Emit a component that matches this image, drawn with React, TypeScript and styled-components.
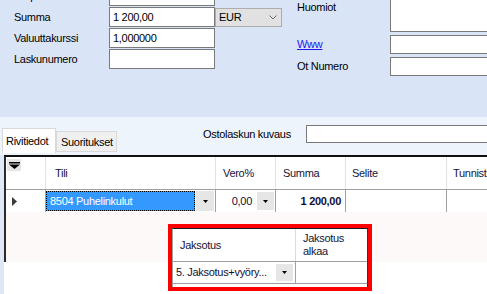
import React from 'react';
import styled, { createGlobalStyle } from 'styled-components';

const GlobalStyle = createGlobalStyle`
  html, body {
    margin: 0;
    padding: 0;
    background: #ffffff;
  }
  body {
    font-family: "Liberation Sans", Arial, sans-serif;
    font-size: 11px;
    letter-spacing: -0.3px;
    line-height: 13px;
    color: #000;
    overflow: hidden;
  }
  * {
    box-sizing: border-box;
  }
`;

const Window = styled.div`
  width: 487px;
  height: 294px;
  overflow: hidden;
  display: flex;
  flex-direction: column;
  background: #ffffff;
`;

/* ---------- top form ---------- */

const TopPanel = styled.div`
  flex: none;
  height: 117px;
  background: #d9e5f7;
  display: flex;
  align-items: flex-start;
  padding-left: 14px;
  overflow: hidden;
`;

const LeftFields = styled.div`
  flex: none;
  display: grid;
  grid-template-columns: 95px 106px 67px;
  grid-auto-rows: 20px;
  row-gap: 1px;
  margin-top: -14px;
`;

const RightFields = styled.div`
  flex: none;
  display: grid;
  grid-template-columns: 93px 110px;
  grid-template-rows: 42px 19px 19px;
  row-gap: 3px;
  margin-top: -10px;
  margin-left: 15px;
`;

const Label = styled.div<{ $top?: boolean }>`
  display: flex;
  align-items: ${(p) => (p.$top ? 'flex-start' : 'center')};
  padding-top: ${(p) => (p.$top ? '11px' : '0')};
  white-space: nowrap;
`;

const LinkLabel = styled(Label)`
  color: #1a1aee;
  text-decoration: underline;
`;

const TextBox = styled.div<{ $width?: number; $height?: number }>`
  flex: none;
  width: ${(p) => (p.$width ? `${p.$width}px` : '100%')};
  height: ${(p) => (p.$height ? `${p.$height}px` : '100%')};
  background: #ffffff;
  border: 1px solid #7a7a7a;
  padding: 0 3px;
  display: flex;
  align-items: center;
  white-space: nowrap;
  overflow: hidden;
`;

const ComboBox = styled.div`
  width: 67px;
  height: 19px;
  background: #e1e1e1;
  border: 1px solid #adadad;
  display: flex;
  align-items: center;
  justify-content: space-between;
  padding: 0 4px 0 3px;
  align-self: start;
  margin-top: 1px;
`;

/* ---------- tabs + description ---------- */

const ToolRow = styled.div`
  flex: none;
  height: 38px;
  background: #eef4fc;
  display: flex;
  align-items: flex-end;
  padding: 0 0 2px 2px;
  overflow: hidden;
`;

const Tab = styled.div<{ $active?: boolean }>`
  flex: none;
  height: ${(p) => (p.$active ? '25px' : '21px')};
  width: ${(p) => (p.$active ? '54px' : '61px')};
  margin-bottom: ${(p) => (p.$active ? '0' : '1px')};
  background: ${(p) => (p.$active ? '#ffffff' : '#f0f0f0')};
  border: 1px solid #d9d9d9;
  border-bottom: ${(p) => (p.$active ? 'none' : '1px solid #d9d9d9')};
  padding: ${(p) => (p.$active ? '6px 0 0 3px' : '4px 0 0 4px')};
  white-space: nowrap;
`;

const DescGroup = styled.div`
  flex: none;
  align-self: flex-start;
  margin-top: 8px;
  margin-left: 86px;
  display: flex;
  align-items: center;
`;

const DescLabel = styled.div`
  flex: none;
  width: 103px;
  white-space: nowrap;
`;

/* ---------- grid ---------- */

const GridArea = styled.div`
  flex: 1;
  position: relative;
  display: flex;
  flex-direction: column;
  padding-left: 4px;
  background: #dfe8f6;
`;

const GridPanel = styled.div`
  flex: none;
  height: 107px;
  background: #fcf9f8;
  border-left: 2px solid #2a2a2a;
  border-top: 2px solid #111111;
  display: flex;
  flex-direction: column;
`;

const Filler = styled.div`
  flex: 1;
  background: #ffffff;
`;

const COLUMNS = '40px 170px 60px 70px 101px 100px';

const HeaderRow = styled.div`
  display: grid;
  grid-template-columns: ${COLUMNS};
  height: 33px;
  background: #ffffff;
  border-bottom: 1px solid #a0a0a0;
`;

const HeaderCell = styled.div<{ $pad?: number }>`
  display: flex;
  align-items: center;
  padding-left: ${(p) => p.$pad ?? 7}px;
  border-right: 1px solid #e2e2e2;
  color: #14143a;
  white-space: nowrap;
  overflow: hidden;
`;

const FilterCell = styled.div`
  border-right: 1px solid #e2e2e2;
  padding: 2px 0 0 1px;
`;

const FilterBox = styled.div`
  width: 14px;
  height: 12px;
  background: #e6e6e6;
  display: flex;
  align-items: center;
  justify-content: center;
`;

const DataRow = styled.div`
  display: grid;
  grid-template-columns: ${COLUMNS};
  height: 22px;
  background: #ffffff;
`;

const DataCell = styled.div<{ $align?: string }>`
  display: flex;
  align-items: center;
  justify-content: ${(p) => p.$align ?? 'flex-start'};
  border-right: 1px solid #a0a0a0;
  color: #10103a;
  white-space: nowrap;
  overflow: hidden;
`;

const IndicatorCell = styled(DataCell)`
  padding-left: 6px;
`;

const EditCell = styled(DataCell)`
  padding: 1px 1px 1px 0;
  gap: 1px;
`;

const SelectedBox = styled.div`
  flex: 1;
  height: 100%;
  background: #3399ff;
  outline: 1px dotted #000000;
  outline-offset: -1px;
  color: #ffffff;
  padding-left: 4px;
  display: flex;
  align-items: center;
`;

const DropButton = styled.div<{ $width?: number }>`
  flex: none;
  width: ${(p) => p.$width ?? 18}px;
  height: 100%;
  background: #e6e6e6;
  display: flex;
  align-items: center;
  justify-content: center;
`;

const ValueText = styled.div<{ $bold?: boolean; $left?: boolean }>`
  flex: 1;
  text-align: ${(p) => (p.$left ? 'left' : 'right')};
  font-weight: ${(p) => (p.$bold ? 700 : 400)};
`;

const VeroCell = styled(DataCell)`
  padding: 2px 1px 2px 0;
  gap: 5px;
`;

const SummaCell = styled(DataCell)`
  padding-right: 4px;
`;

/* ---------- highlighted detail grid ---------- */

const DetailPanel = styled.div`
  position: absolute;
  left: 168px;
  top: 69px;
  width: 204px;
  height: 67px;
  border: 4px solid #ff0000;
  background: #ffffff;
  display: flex;
`;

const DetailInner = styled.div`
  flex: 1;
  border-top: 1px solid #1a1a1a;
  border-left: 1px solid #a0a0a0;
  border-right: 1px solid #333333;
  display: flex;
  flex-direction: column;
`;

const DETAIL_COLUMNS = '123px 1fr';

const DetailHeader = styled.div`
  display: grid;
  grid-template-columns: ${DETAIL_COLUMNS};
  height: 33px;
  border-bottom: 1px solid #a0a0a0;
`;

const DetailHeadCell = styled.div`
  display: flex;
  align-items: center;
  padding-left: 7px;
  padding-right: 6px;
  border-right: 1px solid #dcdcdc;
  color: #14143a;
  &:last-child {
    border-right: none;
  }
`;

const DetailRow = styled.div`
  display: grid;
  grid-template-columns: ${DETAIL_COLUMNS};
  height: 22px;
  border-bottom: 1px solid #a0a0a0;
`;

const DetailCell = styled.div`
  display: flex;
  align-items: center;
  padding: 2px 2px 2px 3px;
  border-right: 1px solid #a0a0a0;
  color: #10103a;
  white-space: nowrap;
  &:last-child {
    border-right: none;
  }
`;

/* ---------- drawings ---------- */

function DropArrow(): React.ReactElement {
  return (
    <svg width="5" height="3" viewBox="0 0 5 3">
      <path d="M0 0h5L2.5 3z" fill="#000" />
    </svg>
  );
}

function Chevron(): React.ReactElement {
  return (
    <svg width="8" height="5" viewBox="0 0 8 5">
      <polyline points="0.5,0.5 4,4 7.5,0.5" fill="none" stroke="#707070" strokeWidth="1" />
    </svg>
  );
}

function FilterIcon(): React.ReactElement {
  return (
    <svg width="11" height="7" viewBox="0 0 11 7">
      <rect x="0" y="0" width="11" height="1.5" fill="#000" />
      <path d="M0 2.5h11L5.5 7z" fill="#000" />
    </svg>
  );
}

function RowIndicator(): React.ReactElement {
  return (
    <svg width="5" height="9" viewBox="0 0 5 9">
      <path d="M0 0L5 4.5L0 9z" fill="#3c3c3c" />
    </svg>
  );
}

function App(): React.ReactElement {
  return (
    <Window>
      <GlobalStyle />
      <TopPanel>
        <LeftFields>
          <Label>Eräpäivä</Label>
          <TextBox>31.1.2024</TextBox>
          <span />
          <Label>Summa</Label>
          <TextBox>1 200,00</TextBox>
          <ComboBox>
            <span>EUR</span>
            <Chevron />
          </ComboBox>
          <Label>Valuuttakurssi</Label>
          <TextBox>1,000000</TextBox>
          <span />
          <Label>Laskunumero</Label>
          <TextBox />
        </LeftFields>
        <RightFields>
          <Label $top>Huomiot</Label>
          <TextBox />
          <LinkLabel>Www</LinkLabel>
          <TextBox />
          <Label>Ot Numero</Label>
          <TextBox />
        </RightFields>
      </TopPanel>

      <ToolRow>
        <Tab $active>Rivitiedot</Tab>
        <Tab>Suoritukset</Tab>
        <DescGroup>
          <DescLabel>Ostolaskun kuvaus</DescLabel>
          <TextBox $width={200} $height={18} />
        </DescGroup>
      </ToolRow>

      <GridArea>
        <GridPanel>
          <HeaderRow>
            <FilterCell>
              <FilterBox>
                <FilterIcon />
              </FilterBox>
            </FilterCell>
            <HeaderCell $pad={9}>Tili</HeaderCell>
            <HeaderCell>Vero%</HeaderCell>
            <HeaderCell>Summa</HeaderCell>
            <HeaderCell $pad={6}>Selite</HeaderCell>
            <HeaderCell $pad={6}>Tunnistin</HeaderCell>
          </HeaderRow>
          <DataRow>
            <IndicatorCell>
              <RowIndicator />
            </IndicatorCell>
            <EditCell>
              <SelectedBox>8504 Puhelinkulut</SelectedBox>
              <DropButton>
                <DropArrow />
              </DropButton>
            </EditCell>
            <VeroCell>
              <ValueText>0,00</ValueText>
              <DropButton $width={17}>
                <DropArrow />
              </DropButton>
            </VeroCell>
            <SummaCell>
              <ValueText $bold>1 200,00</ValueText>
            </SummaCell>
            <DataCell />
            <DataCell />
          </DataRow>
        </GridPanel>
        <Filler />

        <DetailPanel>
          <DetailInner>
            <DetailHeader>
              <DetailHeadCell>Jaksotus</DetailHeadCell>
              <DetailHeadCell>Jaksotus alkaa</DetailHeadCell>
            </DetailHeader>
            <DetailRow>
              <DetailCell>
                <ValueText $left>5. Jaksotus+vyöry...</ValueText>
                <DropButton $width={17}>
                  <DropArrow />
                </DropButton>
              </DetailCell>
              <DetailCell />
            </DetailRow>
          </DetailInner>
        </DetailPanel>
      </GridArea>
    </Window>
  );
}

export default App;
